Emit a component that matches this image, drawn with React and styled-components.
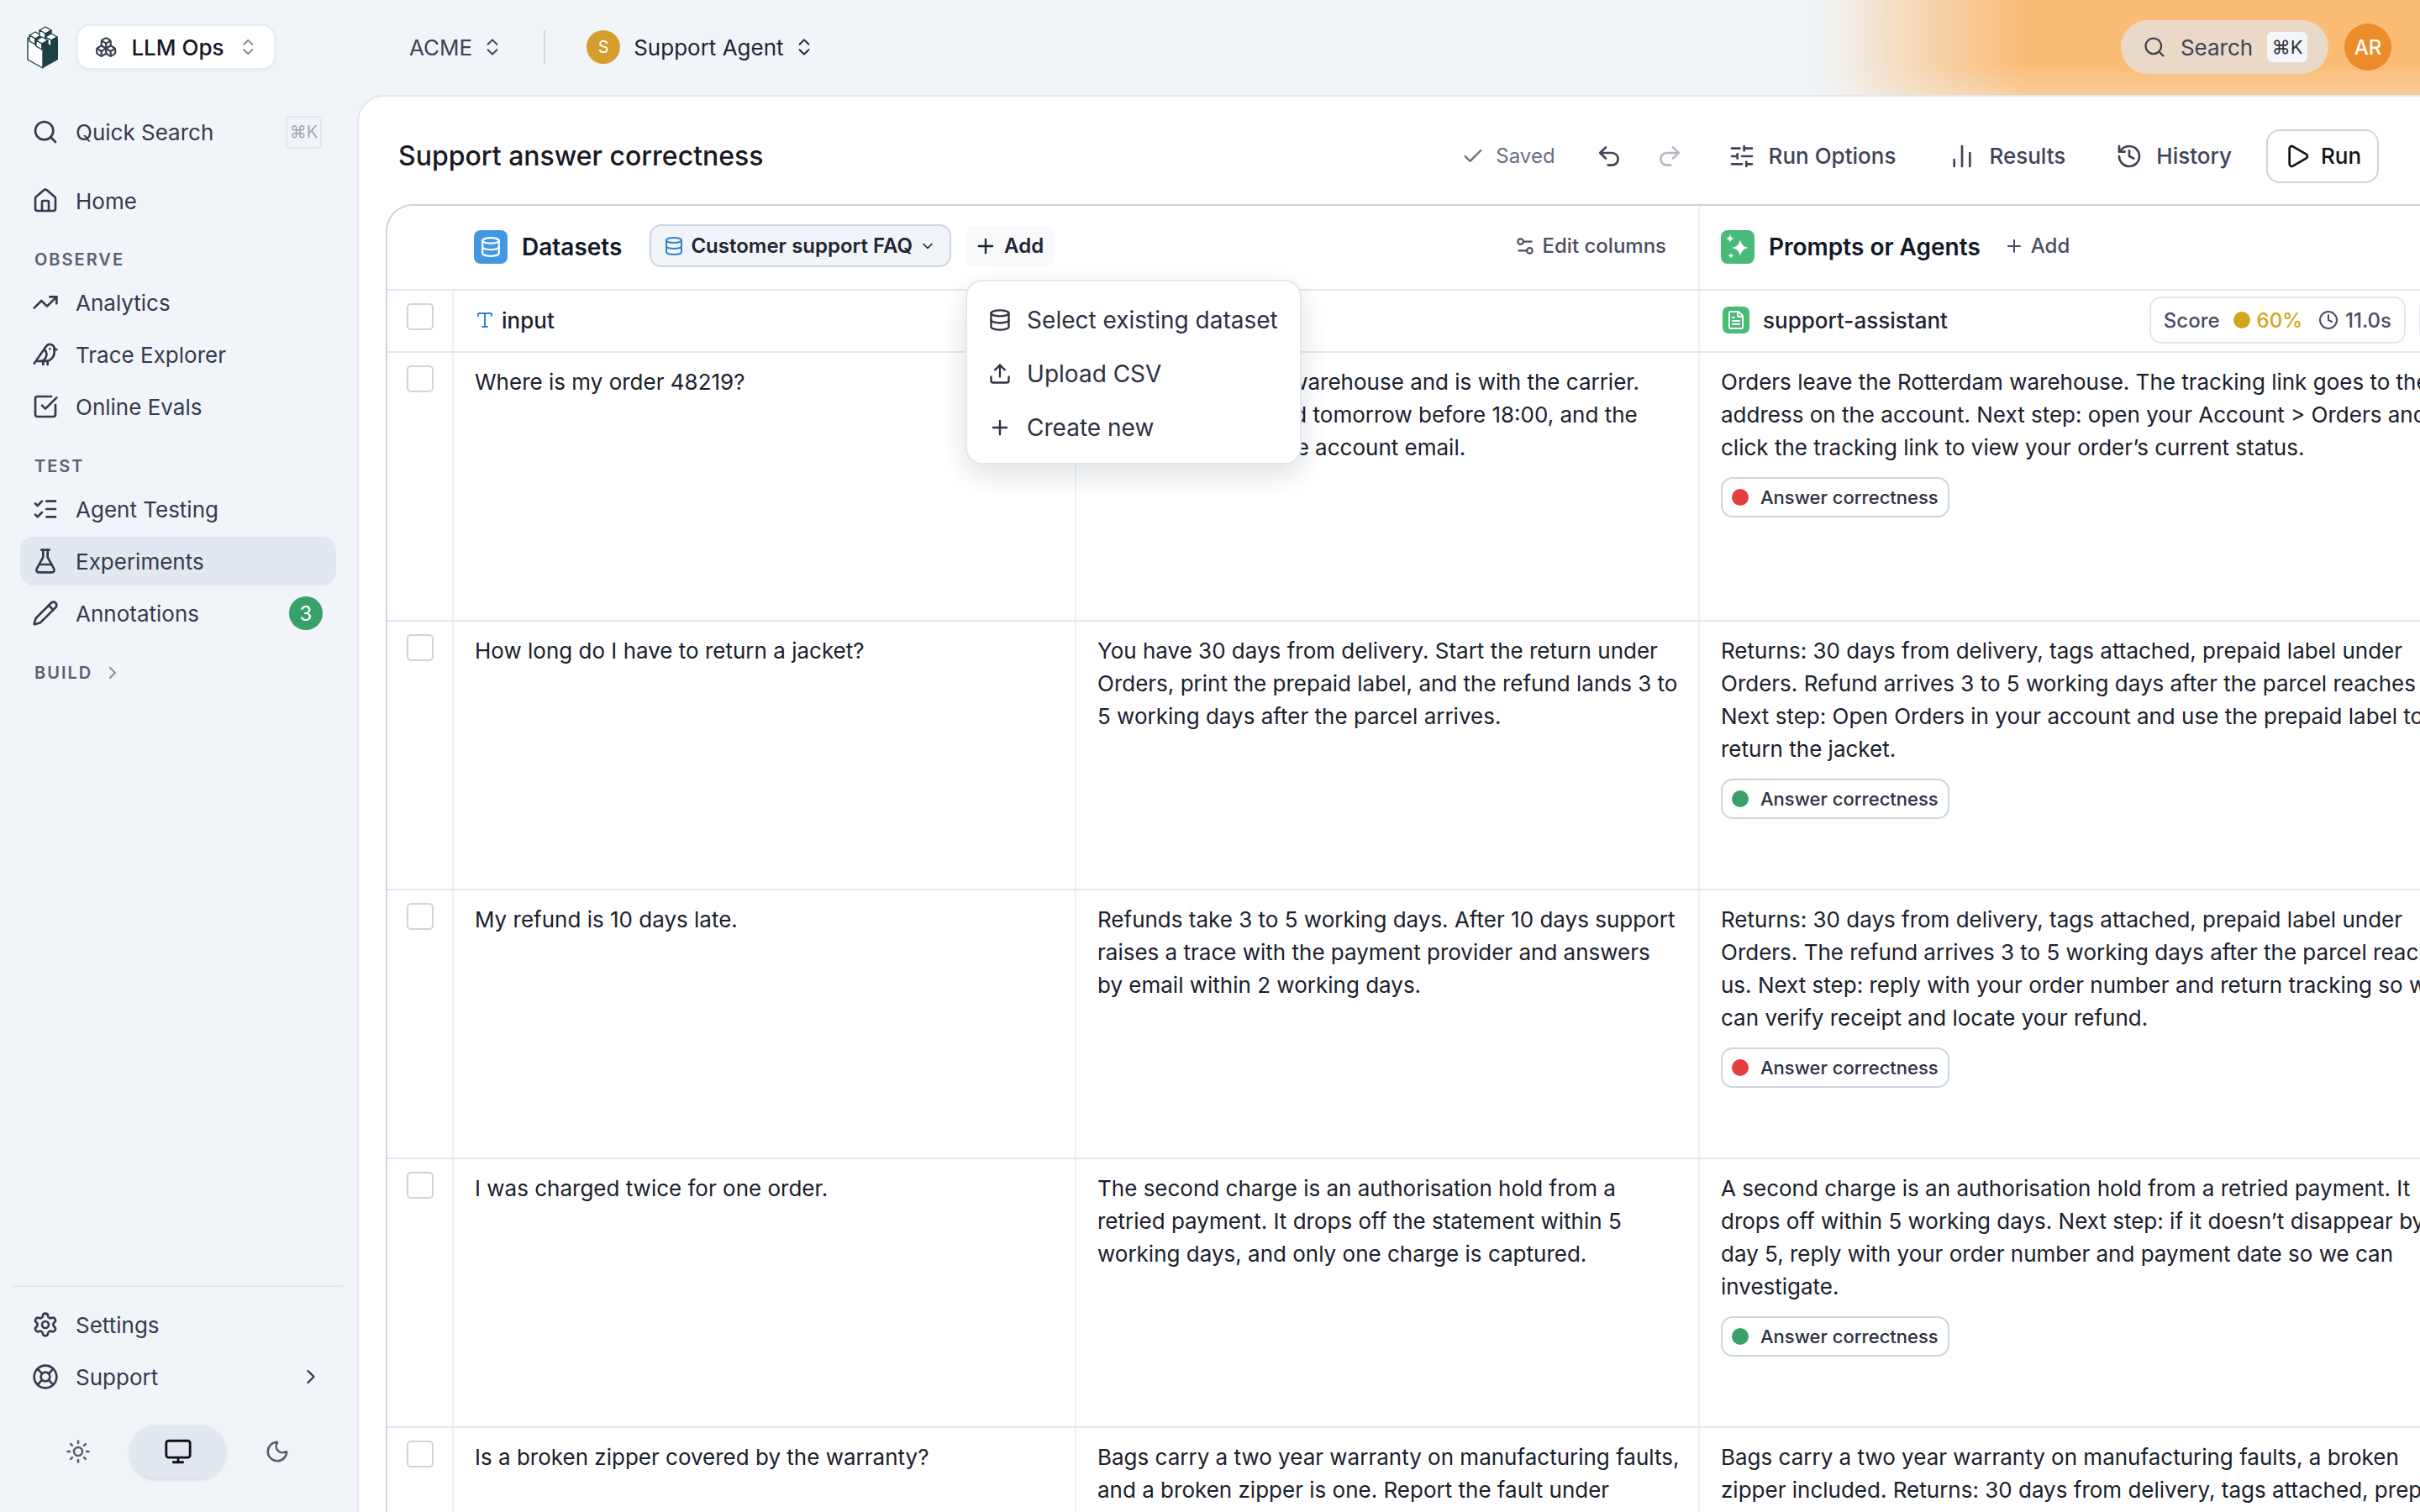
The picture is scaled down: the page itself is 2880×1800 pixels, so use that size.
import React from "react";
import styled, { createGlobalStyle } from "styled-components";
import {
  Search, House, TrendingUp, Bird, SquareCheckBig, ListChecks, FlaskConical, Pencil,
  ChevronRight, ChevronsUpDown, ChevronDown, Settings, LifeBuoy, Sun, Monitor, Moon, Boxes,
  Check, Undo2, Redo2, SlidersHorizontal, ChartNoAxesColumn, History, Play, Database, Plus,
  Settings2, Type, FileText, Clock, Upload,
} from "lucide-react";

const GlobalStyle = createGlobalStyle`
  html, body { margin: 0; padding: 0; height: 100%; overflow: hidden; }
  body {
    background: #f1f5f9;
    color: #1a202c;
    font-family: Inter, "Liberation Sans", sans-serif;
    font-size: 26px;
  }
  * { box-sizing: border-box; }
`;

const Page = styled.div`
  width: 2880px;
  height: 1800px;
  display: flex;
  flex-direction: column;
  overflow: hidden;
`;

/* top bar */
const TopBar = styled.header`
  position: relative;
  flex: 0 0 113px;
  display: flex;
  align-items: center;
  padding: 0 34px 1px 32px;
`;

const Glow = styled.div`
  position: absolute;
  top: 0;
  bottom: 0;
  right: 0;
  width: 730px;
  background:
    linear-gradient(180deg, rgba(241, 245, 249, 0) 68%, rgba(241, 245, 249, 0.28) 100%),
    linear-gradient(90deg, rgba(251, 188, 117, 0) 0%, rgba(251, 188, 117, 0.12) 6%, rgba(251, 188, 117, 0.42) 15%, rgba(251, 188, 117, 0.72) 25%, #fbbc75 36%, #fbbc75 100%);
`;

const LogoMark = styled.svg`
  width: 38px;
  height: 52px;
  flex: none;
`;

const ProductSwitch = styled.div`
  width: 237px;
  height: 54px;
  margin-left: 21px;
  padding: 0 18px 0 20px;
  display: flex;
  align-items: center;
  gap: 17px;
  background: #fff;
  border: 2px solid #e8edf4;
  border-radius: 16px;
  font-weight: 500;
  color: #171923;
  white-space: nowrap;
  box-shadow: 0 1px 3px rgba(30, 41, 59, 0.06);
  svg:last-child { margin-left: auto; color: #7b8094; }
`;

const Crumb = styled.div`
  display: flex;
  align-items: center;
  gap: 11px;
  margin-left: ${(p) => p.$left || 0}px;
  color: ${(p) => (p.$strong ? "#1f2433" : "#3f4356")};
`;

const Divider = styled.div`
  width: 2px;
  height: 40px;
  margin-left: 48px;
  background: #cfd8e3;
`;

const Dot = styled.div`
  width: 40px;
  height: 40px;
  margin-left: 49px;
  border-radius: 50%;
  background: #d69e2e;
  color: #fff;
  font-size: 20px;
  display: flex;
  align-items: center;
  justify-content: center;
`;

const TopRight = styled.div`
  position: relative;
  margin-left: auto;
  display: flex;
  align-items: center;
  gap: 19px;
`;

const SearchPill = styled.div`
  width: 247px;
  height: 64px;
  padding: 0 25px 0 26px;
  display: flex;
  align-items: center;
  gap: 17px;
  border-radius: 32px;
  background: #e9d9c6;
  color: #3f4356;
`;

const Kbd = styled.span`
  margin-left: auto;
  width: 48px;
  height: 36px;
  display: flex;
  align-items: center;
  justify-content: center;
  border-radius: 6px;
  background: #f4f6f9;
  font-size: 22px;
  color: #2d3142;
`;

const Avatar = styled.div`
  width: 56px;
  height: 56px;
  border-radius: 50%;
  background: #ed8c2b;
  color: #fff;
  font-size: 24px;
  font-weight: 500;
  display: flex;
  align-items: center;
  justify-content: center;
`;

/* sidebar */
const Body = styled.div`
  flex: 1;
  min-height: 0;
  display: flex;
`;

const Sidebar = styled.aside`
  flex: 0 0 425px;
  display: flex;
  flex-direction: column;
  padding: 15px 17px 0 24px;
`;

const NavItem = styled.div`
  height: 58px;
  margin-top: ${(p) => p.$top || 0}px;
  margin-bottom: 4px;
  padding: 0 14px;
  display: flex;
  align-items: center;
  gap: 20px;
  border-radius: 16px;
  color: #363a4e;
  background: ${(p) => (p.$active ? "#e2e8f0" : "transparent")};
  width: 376px;
  flex: none;
  svg { flex: none; }
`;

const Section = styled.div`
  display: flex;
  align-items: center;
  gap: 12px;
  height: 28px;
  margin: ${(p) => p.$top}px 0 ${(p) => p.$bottom}px 17px;
  font-size: 20px;
  font-weight: 600;
  letter-spacing: 2px;
  color: #5a5f73;
  svg { color: #8a8fa3; }
`;

const ShortKey = styled.span`
  margin: 0 3px 0 auto;
  width: 43px;
  height: 39px;
  display: flex;
  align-items: center;
  justify-content: center;
  border: 2px solid #e2e8f0;
  border-radius: 6px;
  font-size: 20px;
  color: #a0a7b8;
`;

const Badge = styled.span`
  margin: 0 2px 0 auto;
  width: 40px;
  height: 40px;
  border-radius: 50%;
  background: #38a169;
  color: #fff;
  font-size: 24px;
  display: flex;
  align-items: center;
  justify-content: center;
`;

const NavChevron = styled(ChevronRight)`
  margin: 0 2px 0 auto;
`;

const SideFoot = styled.div`
  margin-top: auto;
  margin-left: -8px;
  width: 392px;
  border-top: 2px solid #e2e8f0;
  padding: 16px 0 40px 8px;
`;

const ThemeRow = styled.div`
  display: flex;
  align-items: center;
  margin: 28px 0 0 8px;
`;

const ThemeButton = styled.div`
  width: ${(p) => (p.$active ? 115 : 122)}px;
  height: 64px;
  display: flex;
  align-items: center;
  justify-content: center;
  border-radius: 32px;
  color: ${(p) => (p.$active ? "#111" : "#585c70")};
  background: ${(p) => (p.$active ? "#e2e8f0" : "transparent")};
  box-shadow: ${(p) => (p.$active ? "0 2px 4px rgba(30,41,59,.12)" : "none")};
`;

/* main */
const Main = styled.main`
  flex: 1;
  min-width: 0;
  background: #fff;
  border-left: 2px solid #e2e8f0;
  border-top: 2px solid #e2e8f0;
  border-top-left-radius: 32px;
  padding: 0 0 0 32px;
  overflow: hidden;
`;

const Toolbar = styled.div`
  height: 128px;
  padding: 13px 49px 0 15px;
  display: flex;
  align-items: center;
`;

const Title = styled.h1`
  margin: 0;
  font-size: 32px;
  font-weight: 500;
  color: #171923;
  margin-right: auto;
`;

const Saved = styled.div`
  display: flex;
  align-items: center;
  gap: 13px;
  font-size: 24px;
  color: #6b7084;
  margin-right: 48px;
`;

const UndoRedo = styled.div`
  display: flex;
  gap: 40px;
  margin-right: 26px;
`;

const UndoIcon = styled.span`
  display: flex;
  color: ${(p) => (p.$off ? "#b4b8c5" : "#3f4356")};
`;

const ToolButton = styled.div`
  padding: 0 28px;
  margin-left: ${(p) => p.$left || 0}px;
  display: flex;
  align-items: center;
  gap: 16px;
  font-weight: 500;
  color: #3f4356;
`;

const RunButton = styled.div`
  width: 134px;
  height: 64px;
  margin-left: 13px;
  padding-left: 19px;
  display: flex;
  align-items: center;
  gap: 12px;
  border: 2px solid #cbd5e1;
  border-radius: 16px;
  font-weight: 500;
  color: #111;
`;

const Table = styled.div`
  width: 2492px;
  border-top: 2px solid #cbd5e1;
  border-left: 2px solid #cbd5e1;
  border-top-left-radius: 32px;
`;

const GridRow = styled.div`
  display: grid;
  grid-template-columns: 79px 741px 742px 928px;
  height: ${(p) => p.$h}px;
  border-bottom: 2px solid #e2e8f0;
`;

const HeadRow = styled.div`
  display: grid;
  grid-template-columns: 1562px 928px;
  height: 101px;
  border-bottom: 2px solid #e2e8f0;
`;

const HeadCell = styled.div`
  display: flex;
  align-items: center;
  padding: 0 38px 1px ${(p) => p.$left}px;
  border-right: ${(p) => (p.$last ? "none" : "2px solid #edf2f7")};
`;

const SectionIcon = styled.span`
  width: 40px;
  height: 40px;
  border-radius: 8px;
  display: flex;
  align-items: center;
  justify-content: center;
  color: #fff;
  background: ${(p) => p.$bg};
  flex: none;
`;

const SectionTitle = styled.span`
  margin-left: 17px;
  font-size: 28px;
  font-weight: 600;
  color: #111827;
  white-space: nowrap;
`;

const DatasetChip = styled.div`
  height: 51px;
  margin: -3px 0 0 33px;
  padding: 0 16px 0 15px;
  display: flex;
  align-items: center;
  gap: 8px;
  background: #f1f5f9;
  border: 2px solid #cbd5e1;
  border-radius: 14px;
  font-size: 24px;
  font-weight: 600;
  color: #1f2433;
  white-space: nowrap;
  svg:first-child { color: #3182ce; }
`;

const AddAnchor = styled.div`
  position: relative;
  margin: -3px 0 0 ${(p) => p.$left}px;
`;

const AddButton = styled.div`
  height: 48px;
  padding: 0 13px 0 10px;
  display: flex;
  align-items: center;
  gap: 8px;
  border-radius: 10px;
  background: ${(p) => (p.$plain ? "transparent" : "#f7f9fb")};
  font-size: 24px;
  font-weight: ${(p) => (p.$plain ? 500 : 600)};
  color: ${(p) => (p.$plain ? "#4a4e62" : "#1f2433")};
  white-space: nowrap;
`;

const EditColumns = styled.div`
  margin: -3px 0 0 auto;
  display: flex;
  align-items: center;
  gap: 8px;
  font-size: 24px;
  font-weight: 500;
  color: #4a4e62;
`;

const Menu = styled.div`
  position: absolute;
  z-index: 5;
  top: 64px;
  left: 0;
  width: 400px;
  padding: 14px 0 10px;
  background: #fff;
  border: 2px solid #e2e8f0;
  border-radius: 20px;
  box-shadow: 0 12px 32px rgba(30, 41, 59, 0.14);
`;

const MenuItem = styled.div`
  height: 64px;
  padding: 0 20px 0 25px;
  display: flex;
  align-items: center;
  gap: 18px;
  font-size: 28px;
  color: #2d3142;
  white-space: nowrap;
`;

const CheckCell = styled.div`
  padding: 15px 0 0 23px;
  border-right: 2px solid #edf2f7;
`;

const Box = styled.div`
  width: 32px;
  height: 32px;
  border: 2px solid #cbd5e1;
  border-radius: 5px;
  background: #fff;
`;

const ColHead = styled.div`
  display: flex;
  align-items: center;
  gap: ${(p) => (p.$last ? 16 : 8)}px;
  padding: 0 24px 2px 25px;
  font-weight: 500;
  color: #1f2433;
  border-right: ${(p) => (p.$last ? "none" : "2px solid #edf2f7")};
  svg { flex: none; }
`;

const FileIcon = styled.span`
  width: 32px;
  height: 32px;
  margin-left: 2px;
  border-radius: 7px;
  background: #48bb78;
  color: #fff;
  display: flex;
  align-items: center;
  justify-content: center;
`;

const ScorePill = styled.div`
  height: 56px;
  margin-left: auto;
  padding: 0 15px;
  display: flex;
  align-items: center;
  gap: 8px;
  border: 2px solid #e2e8f0;
  border-radius: 14px;
  font-size: 24px;
  font-weight: 500;
  color: #4a4e62;
  white-space: nowrap;
`;

const ScoreDot = styled.span`
  width: 20px;
  height: 20px;
  margin-left: 8px;
  border-radius: 50%;
  background: #d1a61b;
`;

const ScoreValue = styled.span`
  color: #d1a61b;
  margin-right: 11px;
`;

const StubPill = styled.div`
  width: 48px;
  height: 56px;
  border: 2px solid #e2e8f0;
  border-radius: 14px;
  flex: none;
`;

const Cell = styled.div`
  padding: 15px 20px 0 25px;
  line-height: 39px;
  color: #1a202c;
  border-right: ${(p) => (p.$last ? "none" : "2px solid #edf2f7")};
`;

const OutputText = styled.div`
  width: 880px;
`;

const Verdict = styled.div`
  display: inline-flex;
  align-items: center;
  gap: 14px;
  height: 48px;
  margin-top: 16px;
  padding: 0 11px;
  border: 2px solid #cbd5e1;
  border-radius: 14px;
  font-size: 22px;
  font-weight: 500;
  line-height: 1;
  color: #2d3142;
`;

const VerdictDot = styled.span`
  width: 20px;
  height: 20px;
  border-radius: 50%;
  background: ${(p) => (p.$pass ? "#38a169" : "#e53e3e")};
`;

const topNav = [
  { label: "Analytics", icon: TrendingUp },
  { label: "Trace Explorer", icon: Bird },
  { label: "Online Evals", icon: SquareCheckBig },
];

const rows = [
  {
    input: "Where is my order 48219?",
    expected: "Your order left the warehouse and is with the carrier. Delivery is expected tomorrow before 18:00, and the tracking link is in the account email.",
    output: "Orders leave the Rotterdam warehouse. The tracking link goes to the address on the account. Next step: open your Account > Orders and click the tracking link to view your order’s current status.",
    pass: false,
  },
  {
    input: "How long do I have to return a jacket?",
    expected: "You have 30 days from delivery. Start the return under Orders, print the prepaid label, and the refund lands 3 to 5 working days after the parcel arrives.",
    output: "Returns: 30 days from delivery, tags attached, prepaid label under Orders. Refund arrives 3 to 5 working days after the parcel reaches us. Next step: Open Orders in your account and use the prepaid label to return the jacket.",
    pass: true,
  },
  {
    input: "My refund is 10 days late.",
    expected: "Refunds take 3 to 5 working days. After 10 days support raises a trace with the payment provider and answers by email within 2 working days.",
    output: "Returns: 30 days from delivery, tags attached, prepaid label under Orders. The refund arrives 3 to 5 working days after the parcel reaches us. Next step: reply with your order number and return tracking so we can verify receipt and locate your refund.",
    pass: false,
  },
  {
    input: "I was charged twice for one order.",
    expected: "The second charge is an authorisation hold from a retried payment. It drops off the statement within 5 working days, and only one charge is captured.",
    output: "A second charge is an authorisation hold from a retried payment. It drops off within 5 working days. Next step: if it doesn’t disappear by day 5, reply with your order number and payment date so we can investigate.",
    pass: true,
  },
  {
    input: "Is a broken zipper covered by the warranty?",
    expected: "Bags carry a two year warranty on manufacturing faults, and a broken zipper is one. Report the fault under Orders.",
    output: "Bags carry a two year warranty on manufacturing faults, a broken zipper included. Returns: 30 days from delivery, tags attached, prepaid label under Orders.",
    pass: true,
  },
];

const cubes = [
  [10, 14],
  [22, 8],
  [29, 16],
  [18, 20],
];

const Logo = () => (
  <LogoMark viewBox="0 0 38 52" aria-hidden="true">
    <polygon points="19,51 37,41 37,16 19,27" fill="#1d3f45" />
    <polygon points="19,51 1,41 1,15 19,27" fill="#fff" stroke="#1d3f45" strokeWidth="1.4" strokeLinejoin="round" />
    {cubes.map(([x, y]) => (
      <g key={`${x}-${y}`} stroke="#1d3f45" strokeWidth="1.4" strokeLinejoin="round">
        <polygon points={`${x},${y - 6} ${x + 7},${y - 2} ${x},${y + 2} ${x - 7},${y - 2}`} fill="#fff" />
        <polygon points={`${x - 7},${y - 2} ${x},${y + 2} ${x},${y + 9} ${x - 7},${y + 5}`} fill="#fff" />
        <polygon points={`${x + 7},${y - 2} ${x},${y + 2} ${x},${y + 9} ${x + 7},${y + 5}`} fill="#1d3f45" />
      </g>
    ))}
  </LogoMark>
);

const Sparkle = () => (
  <svg width="34" height="34" viewBox="0 0 34 34" fill="currentColor" aria-hidden="true">
    <path d="M20 8 C21 14 24 17 30 18 C24 19 21 22 20 28 C19 22 16 19 10 18 C16 17 19 14 20 8Z" />
    <path d="M8 2 C8.5 5 10 6.5 13 7 C10 7.5 8.5 9 8 12 C7.5 9 6 7.5 3 7 C6 6.5 7.5 5 8 2Z" />
    <path d="M9 24 C9.4 26 10.2 26.8 12.5 27.2 C10.2 27.6 9.4 28.4 9 31 C8.6 28.4 7.8 27.6 5.5 27.2 C7.8 26.8 8.6 26 9 24Z" />
  </svg>
);

const App = () => (
  <Page>
    <GlobalStyle />
    <TopBar>
      <Glow />
      <Logo />
      <ProductSwitch>
        <Boxes size={28} color="#3f4356" />
        <span>LLM Ops</span>
        <ChevronsUpDown size={26} strokeWidth={1.8} />
      </ProductSwitch>
      <Crumb $left={159}>
        <span>ACME</span>
        <ChevronsUpDown size={26} strokeWidth={1.8} />
      </Crumb>
      <Divider />
      <Dot>S</Dot>
      <Crumb $left={16} $strong>
        <span>Support Agent</span>
        <ChevronsUpDown size={26} strokeWidth={1.8} />
      </Crumb>
      <TopRight>
        <SearchPill>
          <Search size={28} />
          <span>Search</span>
          <Kbd>⌘K</Kbd>
        </SearchPill>
        <Avatar>AR</Avatar>
      </TopRight>
    </TopBar>
    <Body>
      <Sidebar>
        <NavItem>
          <Search size={32} />
          <span>Quick Search</span>
          <ShortKey>⌘K</ShortKey>
        </NavItem>
        <NavItem $top={20}>
          <House size={32} />
          <span>Home</span>
        </NavItem>
        <Section $top={23} $bottom={8}>OBSERVE</Section>
        {topNav.map(({ label, icon: Icon }) => (
          <NavItem key={label}>
            <Icon size={32} />
            <span>{label}</span>
          </NavItem>
        ))}
        <Section $top={24} $bottom={8}>TEST</Section>
        <NavItem>
          <ListChecks size={32} />
          <span>Agent Testing</span>
        </NavItem>
        <NavItem $active>
          <FlaskConical size={32} />
          <span>Experiments</span>
        </NavItem>
        <NavItem>
          <Pencil size={32} />
          <span>Annotations</span>
          <Badge>3</Badge>
        </NavItem>
        <Section $top={24} $bottom={0}>
          BUILD
          <ChevronRight size={24} />
        </Section>
        <SideFoot>
          <NavItem>
            <Settings size={32} />
            <span>Settings</span>
          </NavItem>
          <NavItem>
            <LifeBuoy size={32} />
            <span>Support</span>
            <NavChevron size={28} />
          </NavItem>
          <ThemeRow>
            <ThemeButton>
              <Sun size={30} />
            </ThemeButton>
            <ThemeButton $active>
              <Monitor size={34} />
            </ThemeButton>
            <ThemeButton>
              <Moon size={30} />
            </ThemeButton>
          </ThemeRow>
        </SideFoot>
      </Sidebar>
      <Main>
        <Toolbar>
          <Title>Support answer correctness</Title>
          <Saved>
            <Check size={28} />
            <span>Saved</span>
          </Saved>
          <UndoRedo>
            <UndoIcon>
              <Undo2 size={32} />
            </UndoIcon>
            <UndoIcon $off>
              <Redo2 size={32} />
            </UndoIcon>
          </UndoRedo>
          <ToolButton>
            <SlidersHorizontal size={32} />
            <span>Run Options</span>
          </ToolButton>
          <ToolButton $left={7}>
            <ChartNoAxesColumn size={32} />
            <span>Results</span>
          </ToolButton>
          <ToolButton $left={4}>
            <History size={32} />
            <span>History</span>
          </ToolButton>
          <RunButton>
            <Play size={32} />
            <span>Run</span>
          </RunButton>
        </Toolbar>
        <Table>
          <HeadRow>
            <HeadCell $left={103}>
              <SectionIcon $bg="#4299e1">
                <Database size={26} />
              </SectionIcon>
              <SectionTitle>Datasets</SectionTitle>
              <DatasetChip>
                <Database size={24} />
                <span>Customer support FAQ</span>
                <ChevronDown size={20} />
              </DatasetChip>
              <AddAnchor $left={17}>
                <AddButton>
                  <Plus size={28} />
                  <span>Add</span>
                </AddButton>
                <Menu>
                  <MenuItem>
                    <Database size={28} />
                    <span>Select existing dataset</span>
                  </MenuItem>
                  <MenuItem>
                    <Upload size={28} />
                    <span>Upload CSV</span>
                  </MenuItem>
                  <MenuItem>
                    <Plus size={28} />
                    <span>Create new</span>
                  </MenuItem>
                </Menu>
              </AddAnchor>
              <EditColumns>
                <Settings2 size={26} />
                <span>Edit columns</span>
              </EditColumns>
            </HeadCell>
            <HeadCell $left={25} $last>
              <SectionIcon $bg="#48bb78">
                <Sparkle />
              </SectionIcon>
              <SectionTitle>Prompts or Agents</SectionTitle>
              <AddAnchor $left={18}>
                <AddButton $plain>
                  <Plus size={24} />
                  <span>Add</span>
                </AddButton>
              </AddAnchor>
            </HeadCell>
          </HeadRow>
          <GridRow $h={74}>
            <CheckCell>
              <Box />
            </CheckCell>
            <ColHead>
              <Type size={24} color="#3182ce" />
              <span>input</span>
            </ColHead>
            <ColHead />
            <ColHead $last>
              <FileIcon>
                <FileText size={24} />
              </FileIcon>
              <span>support-assistant</span>
              <ScorePill>
                <span>Score</span>
                <ScoreDot />
                <ScoreValue>60%</ScoreValue>
                <Clock size={24} />
                <span>11.0s</span>
              </ScorePill>
              <StubPill />
            </ColHead>
          </GridRow>
          {rows.map((row) => (
            <GridRow key={row.input} $h={320}>
              <CheckCell>
                <Box />
              </CheckCell>
              <Cell>{row.input}</Cell>
              <Cell>{row.expected}</Cell>
              <Cell $last>
                <OutputText>{row.output}</OutputText>
                <Verdict>
                  <VerdictDot $pass={row.pass} />
                  <span>Answer correctness</span>
                </Verdict>
              </Cell>
            </GridRow>
          ))}
        </Table>
      </Main>
    </Body>
  </Page>
);

export default App;
